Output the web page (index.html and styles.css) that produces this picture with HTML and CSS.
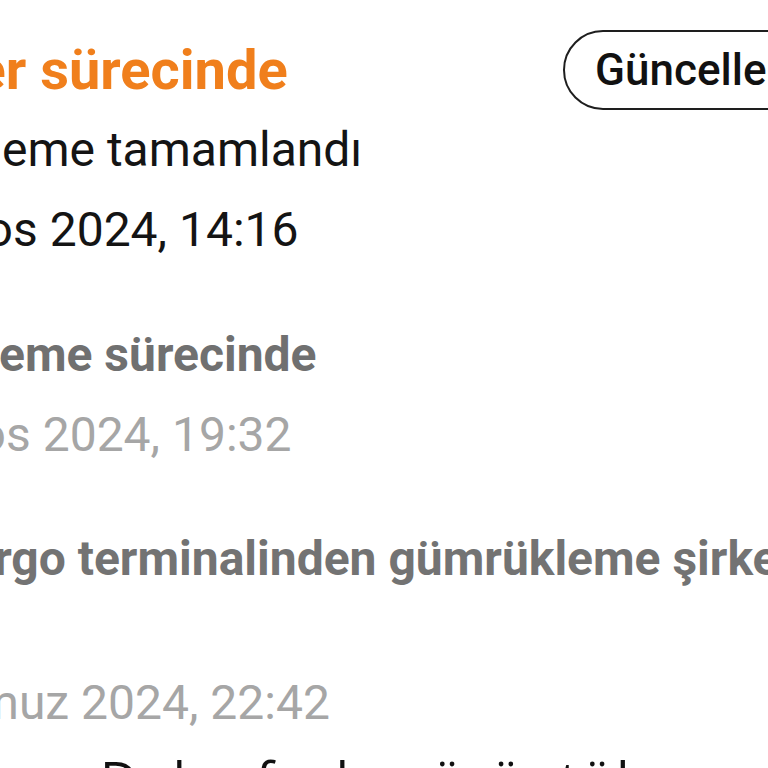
FILE: index.html
```html
<!DOCTYPE html>
<html lang="tr">
<head>
<meta charset="utf-8">
<title>Kargo takibi</title>
<link rel="stylesheet" href="styles.css">
</head>
<body>
<div class="screen">
  <div class="feed">
    <section class="entry entry--current">
      <div class="status-row">
        <h1 class="status-title">İşlemler sürecinde</h1>
        <button class="refresh-btn">Güncellemeler</button>
      </div>
      <p class="entry-desc">Gümrükleme tamamlandı</p>
      <p class="entry-date">7 Ağustos 2024, 14:16</p>
    </section>
    <section class="entry entry--past entry--customs">
      <p class="entry-title">Gümrükleme sürecinde</p>
      <p class="entry-date">6 Ağustos 2024, 19:32</p>
    </section>
    <section class="entry entry--past entry--long">
      <p class="entry-title">Hava kargo terminalinden gümrükleme şirketine teslim edildi</p>
      <p class="entry-date">25 Temmuz 2024, 22:42</p>
    </section>
    <div class="more"><a class="more-link">Daha fazla görüntüle</a></div>
  </div>
</div>
</body>
</html>
```
FILE: styles.css
```css
html, body {
  margin: 0;
  padding: 0;
  background: #ffffff;
}

.screen {
  width: 768px;
  height: 768px;
  overflow: hidden;
  font-family: Roboto, "Noto Sans", sans-serif;
  color: #141414;
}

.feed {
  margin-left: -178px;
  padding-top: 30px;
  white-space: nowrap;
}

.status-row {
  display: flex;
  align-items: center;
  height: 80px;
}

.status-title {
  margin: 0;
  width: 741px;
  flex-shrink: 0;
  font-size: 56px;
  font-weight: 700;
  line-height: 67px;
  color: #f07f1c;
}

.refresh-btn {
  flex-shrink: 0;
  box-sizing: border-box;
  height: 80px;
  padding: 0 30px;
  border: 2.5px solid #1e1e1e;
  border-radius: 40px;
  background: #ffffff;
  font-family: Roboto, "Noto Sans", sans-serif;
  font-size: 44px;
  font-weight: 500;
  color: #111111;
  white-space: nowrap;
}

.entry-desc,
.entry-date,
.entry-title {
  margin: 0;
  font-size: 48px;
  line-height: 80px;
}

.entry--current .entry-desc,
.entry--current .entry-date {
  color: #141414;
}

.entry--past {
  margin-top: 45px;
}

.entry--customs {
  margin-left: -7px;
}

.entry--long {
  margin-top: 44px;
}

.entry-title {
  font-weight: 700;
  color: #707070;
}

.entry--long .entry-title {
  color: #737373;
}

.entry--past .entry-date {
  color: #a6a6a6;
}

.entry--long .entry-date {
  margin-top: 64px;
  margin-left: -4px;
}

.more {
  margin-top: 5px;
  padding-left: 278px;
}

.more-link {
  font-family: "Open Sans", "Noto Sans", sans-serif;
  font-size: 52px;
  letter-spacing: 3px;
  line-height: 1.2;
  color: #111111;
}
```
